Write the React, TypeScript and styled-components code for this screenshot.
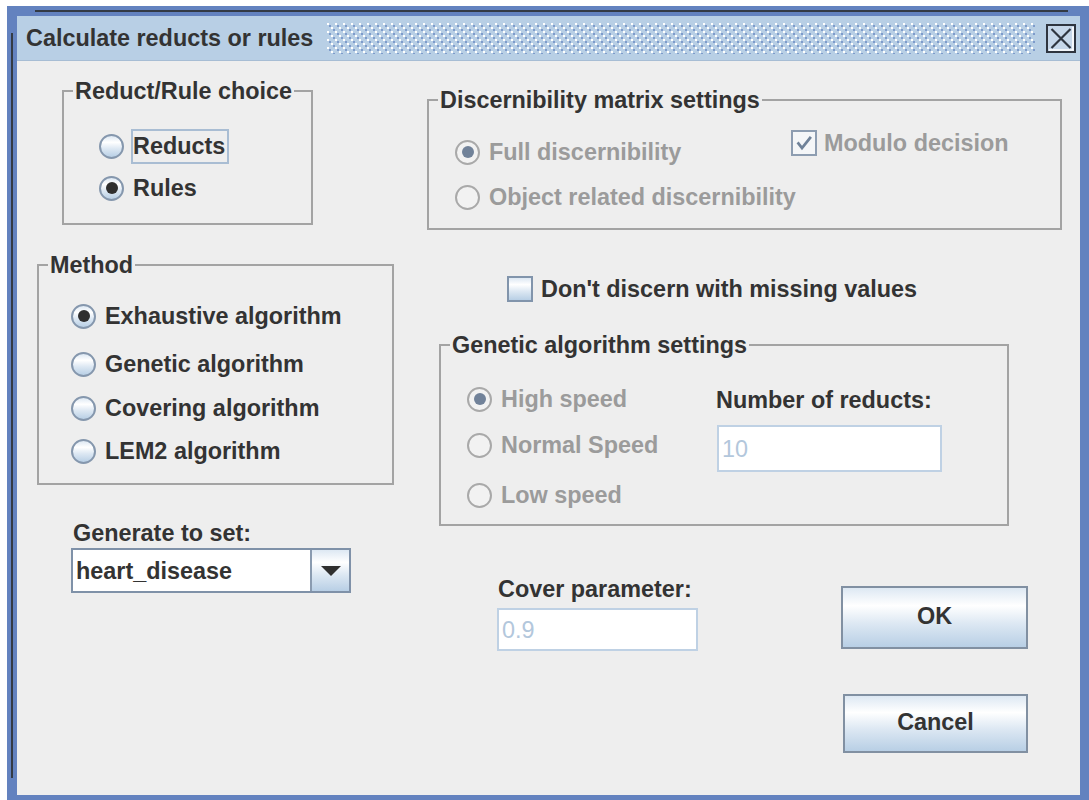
import React from 'react';
import styled, { createGlobalStyle } from 'styled-components';

const FONT = `"Liberation Sans", Arial, sans-serif`;
const TEXT = '#333333';
const DISABLED = '#9b9b9b';
const OCEAN = 'linear-gradient(180deg, #dde8f3 0%, #ffffff 30%, #dde8f3 60%, #b8cfe5 100%)';

const Global = createGlobalStyle`
  html, body { margin: 0; padding: 0; background: #ffffff; overflow: hidden; }
  #root { width: 1089px; height: 800px; overflow: hidden; }
`;

const Screen = styled.div`
  box-sizing: border-box;
  width: 1089px;
  height: 800px;
  overflow: hidden;
  padding: 6px 0 0 7px;
`;

/* Metal frame: blue border with dark inner lines cut short at the corners */
const Frame = styled.div`
  position: relative;
  box-sizing: border-box;
  width: 1083px;
  height: 799px;
  padding: 10px;
  background: #6382bf;
  display: flex;
  flex-direction: column;
  &::before {
    content: '';
    position: absolute;
    left: 28px;
    right: 22px;
    top: 4px;
    height: 2px;
    background: #333a44;
  }
  &::after {
    content: '';
    position: absolute;
    left: 4px;
    top: 27px;
    bottom: 27px;
    width: 2px;
    background: #333a44;
  }
`;

const TitleBar = styled.div`
  display: flex;
  align-items: center;
  height: 44px;
  flex: none;
  background: #b8cfe5;
  border-bottom: 1px solid #a7bdd4;
  padding-left: 9px;
`;

const TitleText = styled.span`
  font: bold 23.4px/26px ${FONT};
  color: ${TEXT};
  white-space: nowrap;
`;

const Bumps = styled.div`
  flex: 1;
  height: 31px;
  margin: 0 11px 0 14px;
  background-color: #b8cfe5;
  background-image:
    conic-gradient(at 2px 2px, transparent 75%, #ffffff 0),
    conic-gradient(at 2px 2px, transparent 75%, #ffffff 0),
    conic-gradient(at 2px 2px, transparent 75%, #7e9bcb 0),
    conic-gradient(at 2px 2px, transparent 75%, #7e9bcb 0);
  background-size: 8px 8px;
  background-position: 0 0, 4px 4px, 2px 2px, 6px 6px;
`;

const CloseBox = styled.div`
  flex: none;
  width: 30px;
  height: 29px;
  margin-right: 4px;
  display: flex;
`;

const Content = styled.div`
  flex: 1;
  background: #eeeeee;
  display: grid;
  grid-template-columns: 390px 1fr;
  align-items: start;
  padding-left: 20px;
`;

const Column = styled.div`
  display: flex;
  flex-direction: column;
  align-items: flex-start;
`;

const Group = styled.fieldset<{ $w: number; $h: number; $top: number; $left?: number }>`
  box-sizing: border-box;
  width: ${p => p.$w}px;
  height: ${p => p.$h}px;
  margin: ${p => p.$top}px 0 0 ${p => p.$left ?? 0}px;
  padding: 0;
  min-width: 0;
  border: 2px solid #a3a3a3;
`;

const Legend = styled.legend`
  margin-left: 9px;
  padding: 0 2px;
  font: bold 23.4px/26px ${FONT};
  color: ${TEXT};
  white-space: nowrap;
`;

const Stack = styled.div<{ $top: number; $left: number; $width?: number }>`
  display: flex;
  flex-direction: column;
  padding: ${p => p.$top}px 0 0 ${p => p.$left}px;
  ${p => (p.$width ? `width: ${p.$width}px; box-sizing: border-box; flex: none;` : '')}
`;

const SplitBody = styled.div`
  display: flex;
  align-items: flex-start;
`;

const Row = styled.div<{ $left?: number; $top?: number }>`
  display: flex;
  align-items: center;
  height: 36px;
  margin: ${p => p.$top ?? 0}px 0 0 ${p => p.$left ?? 0}px;
`;

const RadioCircle = styled.span<{ $checked?: boolean; $disabled?: boolean }>`
  flex: none;
  box-sizing: border-box;
  width: 25px;
  height: 25px;
  border-radius: 50%;
  border: 2px solid ${p => (p.$disabled ? '#a9a9a9' : '#8597ad')};
  background: ${p => (p.$disabled ? '#f2f2f2' : OCEAN)};
  display: flex;
  align-items: center;
  justify-content: center;
  &::after {
    content: '';
    display: ${p => (p.$checked ? 'block' : 'none')};
    width: 12px;
    height: 12px;
    border-radius: 50%;
    background: ${p => (p.$disabled ? '#718299' : '#2f2f2f')};
  }
`;

const ControlLabel = styled.span<{ $disabled?: boolean; $focused?: boolean }>`
  margin-left: 7px;
  padding: 0 2px 0 0;
  border: 2px solid ${p => (p.$focused ? '#a9bdd3' : 'transparent')};
  font: bold 23.4px/31px ${FONT};
  color: ${p => (p.$disabled ? DISABLED : TEXT)};
  white-space: nowrap;
`;

const CheckSquare = styled.span<{ $disabled?: boolean }>`
  flex: none;
  box-sizing: border-box;
  width: 26px;
  height: 26px;
  border: 2px solid ${p => (p.$disabled ? '#8d9db1' : '#8194ab')};
  background: ${p => (p.$disabled ? '#f4f6f8' : OCEAN)};
  display: flex;
  align-items: center;
  justify-content: center;
`;

const CheckText = styled.span<{ $disabled?: boolean; $gap: number }>`
  margin-left: ${p => p.$gap}px;
  font: bold 23.4px/31px ${FONT};
  color: ${p => (p.$disabled ? DISABLED : TEXT)};
  white-space: nowrap;
`;

const Caption = styled.div<{ $top: number; $left: number }>`
  margin: ${p => p.$top}px 0 0 ${p => p.$left}px;
  font: bold 23.4px/26px ${FONT};
  color: ${TEXT};
  white-space: nowrap;
`;

const TextField = styled.div<{ $w: number; $h: number; $top: number }>`
  box-sizing: border-box;
  width: ${p => p.$w}px;
  height: ${p => p.$h}px;
  margin-top: ${p => p.$top}px;
  border: 2px solid #bfd1e4;
  background: #ffffff;
  display: flex;
  align-items: center;
  padding-left: 3px;
  font: 23.4px/26px ${FONT};
  color: #b3c7dc;
`;

const Combo = styled.div`
  box-sizing: border-box;
  width: 280px;
  height: 45px;
  margin: 2px 0 0 34px;
  border: 2px solid #7f91a8;
  display: flex;
`;

const ComboValue = styled.div`
  flex: 1;
  background: #ffffff;
  display: flex;
  align-items: center;
  padding-left: 3px;
  font: bold 23.4px/26px ${FONT};
  color: ${TEXT};
`;

const ComboArrow = styled.div`
  flex: none;
  width: 37px;
  border-left: 2px solid #8a9bb0;
  background: ${OCEAN};
  display: flex;
  align-items: center;
  justify-content: center;
`;

const BottomRow = styled.div`
  display: flex;
  align-items: flex-start;
  margin: 50px 0 0 70px;
`;

const CoverColumn = styled.div`
  display: flex;
  flex-direction: column;
  width: 201px;
`;

const ButtonColumn = styled.div`
  display: flex;
  flex-direction: column;
  align-items: flex-start;
  margin-left: 143px;
`;

const Button = styled.button<{ $w: number; $h: number; $top: number; $left?: number }>`
  box-sizing: border-box;
  width: ${p => p.$w}px;
  height: ${p => p.$h}px;
  margin: ${p => p.$top}px 0 0 ${p => p.$left ?? 0}px;
  padding: 0 0 3px;
  border: 2px solid #8190a2;
  border-radius: 0;
  background: ${OCEAN};
  font: bold 23.4px/26px ${FONT};
  color: ${TEXT};
  cursor: pointer;
`;

type RadioProps = { label: string; checked?: boolean; disabled?: boolean; focused?: boolean; top?: number };

function Radio({ label, checked, disabled, focused, top }: RadioProps) {
  return (
    <Row $top={top}>
      <RadioCircle $checked={checked} $disabled={disabled} />
      <ControlLabel $disabled={disabled} $focused={focused}>
        {label}
      </ControlLabel>
    </Row>
  );
}

function CheckMark({ color }: { color: string }) {
  return (
    <svg width="18" height="18" viewBox="0 0 18 18">
      <path d="M3.5 9.5 L7 14 L15 4" stroke={color} strokeWidth="2.8" fill="none" strokeLinecap="square" />
    </svg>
  );
}

function CloseIcon() {
  return (
    <svg width="30" height="29" viewBox="0 0 30 29">
      <rect x="1" y="1" width="28" height="27" fill="#c6d7ea" stroke="#2f3540" strokeWidth="2" />
      <path d="M3 26 H27 V3" stroke="#ffffff" strokeWidth="1.6" fill="none" />
      <path d="M5.5 5 L24.5 24 M24.5 5 L5.5 24" stroke="#2f3540" strokeWidth="2.2" />
    </svg>
  );
}

export default function App() {
  return (
    <>
      <Global />
      <Screen>
        <Frame>
          <TitleBar>
            <TitleText>Calculate reducts or rules</TitleText>
            <Bumps />
            <CloseBox>
              <CloseIcon />
            </CloseBox>
          </TitleBar>
          <Content>
            <Column>
              <Group $w={251} $h={147} $top={17} $left={25}>
                <Legend>Reduct/Rule choice</Legend>
                <Stack $top={24} $left={35}>
                  <Radio label="Reducts" focused />
                  <Radio label="Rules" checked top={6} />
                </Stack>
              </Group>

              <Group $w={357} $h={233} $top={27}>
                <Legend>Method</Legend>
                <Stack $top={20} $left={32}>
                  <Radio label="Exhaustive algorithm" checked />
                  <Radio label="Genetic algorithm" top={12} />
                  <Radio label="Covering algorithm" top={8} />
                  <Radio label="LEM2 algorithm" top={7} />
                </Stack>
              </Group>

              <Caption $top={35} $left={36}>Generate to set:</Caption>
              <Combo>
                <ComboValue>heart_disease</ComboValue>
                <ComboArrow>
                  <svg width="20" height="10" viewBox="0 0 20 10">
                    <polygon points="0,0 20,0 10,10" fill="#2f2f2f" />
                  </svg>
                </ComboArrow>
              </Combo>
            </Column>

            <Column>
              <Group $w={635} $h={143} $top={26}>
                <Legend>Discernibility matrix settings</Legend>
                <SplitBody>
                  <Stack $top={21} $left={26} $width={362}>
                    <Radio label="Full discernibility" checked disabled />
                    <Radio label="Object related discernibility" disabled top={9} />
                  </Stack>
                  <Row $top={12}>
                    <CheckSquare $disabled>
                      <CheckMark color="#6f8299" />
                    </CheckSquare>
                    <CheckText $disabled $gap={7}>Modulo decision</CheckText>
                  </Row>
                </SplitBody>
              </Group>

              <Row $top={41} $left={80}>
                <CheckSquare />
                <CheckText $gap={8}>Don&apos;t discern with missing values</CheckText>
              </Row>

              <Group $w={570} $h={194} $top={25} $left={12}>
                <Legend>Genetic algorithm settings</Legend>
                <SplitBody>
                  <Stack $top={23} $left={26} $width={276}>
                    <Radio label="High speed" checked disabled />
                    <Radio label="Normal Speed" disabled top={10} />
                    <Radio label="Low speed" disabled top={14} />
                  </Stack>
                  <Stack $top={29} $left={0}>
                    <Caption $top={0} $left={-1}>Number of reducts:</Caption>
                    <TextField $w={225} $h={47} $top={12}>10</TextField>
                  </Stack>
                </SplitBody>
              </Group>

              <BottomRow>
                <CoverColumn>
                  <Caption $top={0} $left={1}>Cover parameter:</Caption>
                  <TextField $w={201} $h={43} $top={6}>0.9</TextField>
                </CoverColumn>
                <ButtonColumn>
                  <Button $w={187} $h={63} $top={10}>OK</Button>
                  <Button $w={185} $h={59} $top={45} $left={2}>Cancel</Button>
                </ButtonColumn>
              </BottomRow>
            </Column>
          </Content>
        </Frame>
      </Screen>
    </>
  );
}
